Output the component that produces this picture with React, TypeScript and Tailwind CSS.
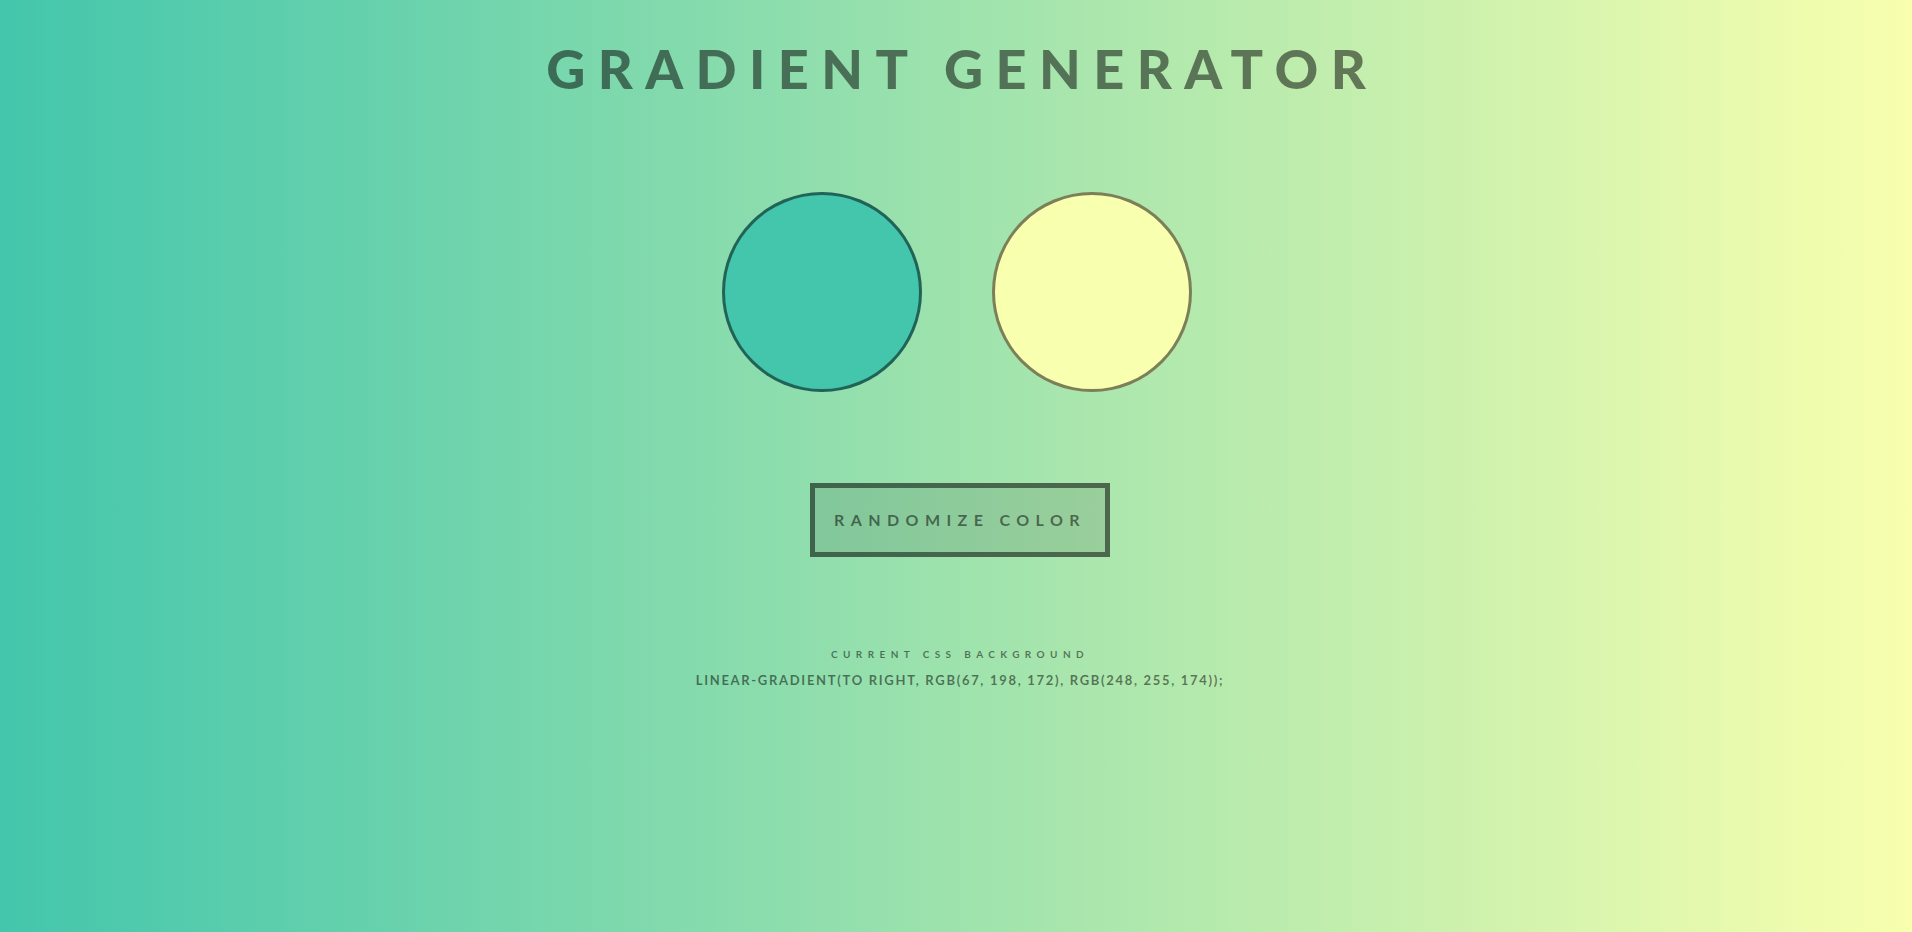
import React, { useState } from 'react';

type Rgb = [number, number, number];

const toCss = (c: Rgb) => `rgb(${c[0]}, ${c[1]}, ${c[2]})`;

const randomRgb = (): Rgb => [
  Math.floor(Math.random() * 256),
  Math.floor(Math.random() * 256),
  Math.floor(Math.random() * 256),
];

const App = () => {
  const [left, setLeft] = useState<Rgb>([67, 198, 172]);
  const [right, setRight] = useState<Rgb>([248, 255, 174]);

  const background = `linear-gradient(to right, ${toCss(left)}, ${toCss(right)})`;

  const randomize = () => {
    setLeft(randomRgb());
    setRight(randomRgb());
  };

  return (
    <div
      className="w-full h-[932px] flex flex-col items-center text-black/50 font-['Lato',sans-serif]"
      style={{ background }}
    >
      <h1 className="mt-[42px] text-[54px] leading-none font-black uppercase tracking-[0.23em] mr-[-0.23em]">
        Gradient Generator
      </h1>

      <div className="mt-[96px] ml-[2px] flex gap-[70px]">
        <div className="w-[200px] h-[200px] rounded-full border-[3px] border-black/50" style={{ backgroundColor: toCss(left) }} />
        <div className="w-[200px] h-[200px] rounded-full border-[3px] border-black/50" style={{ backgroundColor: toCss(right) }} />
      </div>

      <button
        onClick={randomize}
        className="mt-[91px] ml-2 w-[300px] h-[74px] border-[5px] border-black/50 bg-black/10 text-[16px] font-bold uppercase tracking-[0.4em] cursor-pointer"
      >
        Randomize Color
      </button>

      <div className="mt-[90px] ml-2 flex flex-col items-center gap-[10px]">
        <p className="text-[10px] leading-[14px] font-bold uppercase tracking-[0.54em] text-black/50">
          Current CSS Background
        </p>
        <p className="text-[13px] leading-[18px] font-bold uppercase tracking-[0.13em]">
          {background};
        </p>
      </div>
    </div>
  );
};

export default App;
